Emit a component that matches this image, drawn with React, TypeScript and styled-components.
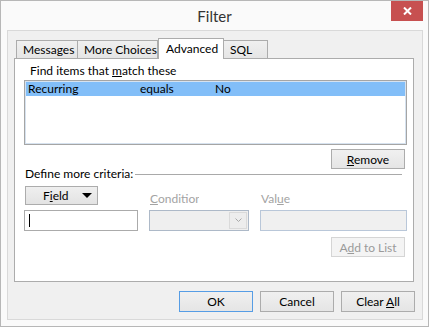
import React from "react";
import styled, {createGlobalStyle, css} from "styled-components";

const GlobalStyle = createGlobalStyle`
  html, body {
    margin: 0;
    padding: 0;
    background: #ffffff;
  }

  body {
    font-family: Lato, "Noto Sans", sans-serif;
    font-size: 12px;
    color: #000000;
  }
`;

type TabProps = { $w: number; $active?: boolean };
type BtnProps = { $default?: boolean; $disabled?: boolean };

const tabs = [
    {label: "Messages", w: 62},
    {label: "More Choices", w: 81},
    {label: "Advanced", w: 66, active: true},
    {label: "SQL", w: 45},
];

export default function App() {
    return (
        <>
            <GlobalStyle/>
            <Window>
                <TitleBar>
                    <span/>
                    <Title>Filter</Title>
                    <CloseButton>
                        <svg width="9" height="8" viewBox="0 0 9 8">
                            <path d="M1 0.5 L8 7.5 M8 0.5 L1 7.5" stroke="#ffffff" strokeWidth="2"/>
                        </svg>
                    </CloseButton>
                </TitleBar>

                <Frame>
                    <TabStrip>
                        {tabs.map((t) => (
                            <Tab key={t.label} $w={t.w} $active={t.active}>
                                {t.label}
                            </Tab>
                        ))}
                    </TabStrip>

                    <Panel>
                        <FindLabel>
                            Find items that <u>m</u>atch these
                        </FindLabel>
                        <ListBox>
                            <ListRow>
                                <span>Recurring</span>
                                <span>equals</span>
                                <span>No</span>
                            </ListRow>
                        </ListBox>
                        <SideButton>
                            <span><u>R</u>emove</span>
                        </SideButton>

                        <CriteriaHeader>Define more criteria:</CriteriaHeader>

                        <CriteriaGrid>
                            <FieldButton>
                                <span>
                                    F<u>i</u>eld
                                </span>
                                <svg width="10" height="5" viewBox="0 0 10 5">
                                    <polygon points="0,0 10,0 5,5" fill="#000000"/>
                                </svg>
                            </FieldButton>
                            <DimLabel $w={49}>
                                <u>C</u>ondition
                            </DimLabel>
                            <DimLabel $w={60}>
                                Val<u>u</u>e
                            </DimLabel>

                            <TextInput>
                                <Caret/>
                            </TextInput>
                            <DisabledSelect>
                                <ArrowBox>
                                    <svg width="7" height="5" viewBox="0 0 7 5">
                                        <path d="M0.5 0.5 L3.5 3.5 L6.5 0.5" stroke="#a8a8a8" fill="none"/>
                                    </svg>
                                </ArrowBox>
                            </DisabledSelect>
                            <DisabledInput/>
                        </CriteriaGrid>

                        <SideButton $disabled style={{marginTop: 6}}>
                            <span>A<u>d</u>d to List</span>
                        </SideButton>
                    </Panel>

                    <ButtonRow>
                        <Button $default>OK</Button>
                        <Button>Cancel</Button>
                        <Button>
                            <span>Clear <u>A</u>ll</span>
                        </Button>
                    </ButtonRow>
                </Frame>
            </Window>
        </>
    );
}

const Window = styled.div`
  width: 429px;
  height: 327px;
  box-sizing: border-box;
  border: 1px solid #b7b7b7;
  background: #fafafa;
  display: flex;
  flex-direction: column;
`;

const TitleBar = styled.div`
  height: 29px;
  display: grid;
  grid-template-columns: 1fr auto 1fr;
  align-items: start;
`;

const Title = styled.div`
  font-size: 15px;
  line-height: 30px;
  color: #333333;
`;

const CloseButton = styled.div`
  justify-self: end;
  width: 32px;
  height: 20px;
  margin-right: 5px;
  background: #c75050;
  display: flex;
  align-items: center;
  justify-content: center;
`;

const Frame = styled.div`
  flex: 1;
  margin: 0 5px 6px 6px;
  border: 1px solid #d9d9d9;
  background: #f0f0f0;
  padding: 7px 7px 7px 6px;
  display: flex;
  flex-direction: column;
`;

const TabStrip = styled.div`
  height: 20px;
  padding-left: 2px;
  display: flex;
  align-items: flex-end;
`;

const Tab = styled.div<TabProps>`
  position: relative;
  box-sizing: border-box;
  width: ${(p) => p.$w}px;
  height: 18px;
  margin-left: -1px;
  padding-left: 6px;
  border: 1px solid #acacac;
  border-bottom: none;
  background: linear-gradient(#f0f0f0, #e5e5e5);
  display: flex;
  align-items: center;
  white-space: nowrap;
  overflow: hidden;

  &:first-child {
    margin-left: 0;
  }

  ${(p) =>
    p.$active &&
    css`
      z-index: 1;
      height: 21px;
      margin-left: 0;
      margin-bottom: -1px;
      padding-left: 7px;
      padding-bottom: 1px;
      background: #ffffff;
    `}
`;

const Panel = styled.div`
  width: 400px;
  height: 224px;
  box-sizing: border-box;
  border: 1px solid #acacac;
  background: #ffffff;
  padding: 4px 6px 0 9px;
  display: flex;
  flex-direction: column;
`;

const FindLabel = styled.div`
  line-height: 16px;
  margin-left: 6px;
`;

const ListBox = styled.div`
  margin-top: 1px;
  height: 65px;
  box-sizing: border-box;
  border: 1px solid #a5a5a5;
  box-shadow: inset 0 0 0 1px #d6e2ef;
  padding: 1px;
`;

const ListRow = styled.div`
  height: 14px;
  line-height: 14px;
  padding-left: 2px;
  background: #82bef8;
  display: grid;
  grid-template-columns: 112px 75px 1fr;
`;

const buttonBase = css`
  box-sizing: border-box;
  width: 74px;
  border: 1px solid #acacac;
  background: linear-gradient(#f0f0f0, #e5e5e5);
  display: flex;
  align-items: center;
  justify-content: center;
  white-space: nowrap;
`;

const SideButton = styled.div<BtnProps>`
  ${buttonBase};
  align-self: flex-end;
  height: 20px;
  margin: 4px 2px 0 0;

  ${(p) =>
    p.$disabled &&
    css`
      border-color: #d5d5d5;
      background: #f4f4f4;
      color: #9a9a9a;
    `}
`;

const CriteriaHeader = styled.div`
  height: 10px;
  line-height: 10px;
  margin: 0 5px 0 1px;
  display: flex;
  align-items: center;
  white-space: nowrap;

  &::after {
    content: "";
    flex: 1;
    height: 1px;
    margin: 1px 0 0 2px;
    background: #a9a9a9;
  }
`;

const CriteriaGrid = styled.div`
  margin-top: 7px;
  display: grid;
  grid-template-columns: 114px 100px 147px;
  grid-template-rows: 21px 21px;
  column-gap: 11px;
  row-gap: 3px;
`;

const FieldButton = styled.div`
  ${buttonBase};
  width: 73px;
  height: 19px;
  margin-left: 1px;
  padding: 0 5px 0 17px;
  justify-content: space-between;
  background: linear-gradient(#efefef, #e3e3e3);
`;

const DimLabel = styled.div<{ $w: number }>`
  align-self: end;
  width: ${(p) => p.$w}px;
  line-height: 16px;
  padding-left: 1px;
  color: #a3a3a3;
  white-space: nowrap;
  overflow: hidden;
`;

const TextInput = styled.div`
  box-sizing: border-box;
  border: 1px solid #ababab;
  background: #ffffff;
  padding-left: 4px;
  display: flex;
  align-items: center;
`;

const Caret = styled.span`
  width: 1px;
  height: 13px;
  background: #000000;
`;

const DisabledSelect = styled.div`
  box-sizing: border-box;
  border: 1px solid #adb9c8;
  background: #efefef;
  padding: 1px;
  display: flex;
  justify-content: flex-end;
`;

const ArrowBox = styled.div`
  box-sizing: border-box;
  width: 18px;
  border: 1px solid #dadada;
  background: #ededed;
  display: flex;
  align-items: center;
  justify-content: center;
`;

const DisabledInput = styled.div`
  box-sizing: border-box;
  border: 1px solid #b9c7d9;
  background: #f0f0f0;
`;

const ButtonRow = styled.div`
  margin-top: 9px;
  display: flex;
  justify-content: flex-end;
  gap: 7px;
`;

const Button = styled.div<BtnProps>`
  ${buttonBase};
  height: 21px;

  ${(p) =>
    p.$default &&
    css`
      border-color: #569de5;
    `}
`;
